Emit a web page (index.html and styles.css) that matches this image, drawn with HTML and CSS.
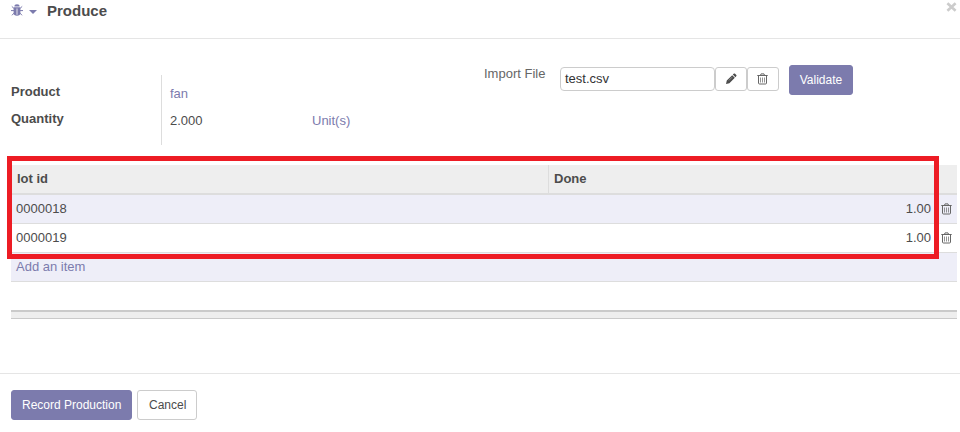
FILE: index.html
```html
<!DOCTYPE html>
<html lang="en">
<head>
<meta charset="utf-8">
<title>Produce</title>
<link rel="stylesheet" href="styles.css">
</head>
<body>
<svg width="0" height="0" class="defs">
  <symbol id="trash" viewBox="0 0 11 12">
    <path d="M0.3 2.5h10.4M3.5 2.3L4 .9h3l.5 1.4M1.5 2.7v7.3q0 1 1 1h6q1 0 1-1V2.7" fill="none" stroke="currentColor"/>
    <path d="M3.5 4.5v5M5.5 4.5v5M7.5 4.5v5" fill="none" stroke="currentColor" stroke-width=".7"/>
  </symbol>
</svg>
<div class="modal">
  <header class="header">
    <svg class="bug" width="12" height="13" viewBox="0 0 12 13"><path d="M3.4 2.6a2.6 2.4 0 0 1 5.2 0zM2.6 3.3h6.8v5.7q0 2.8-3.4 2.8t-3.4-2.8z" fill="currentColor"/><path d="M.8 2.4l2 1.9M11.2 2.4l-2 1.9M0 6.6h12M1 11.3l2-2.2M11 11.3l-2-2.2" stroke="currentColor" fill="none"/><path d="M6 4.5v6.3" stroke="#fff" stroke-width=".8"/></svg>
    <span class="caret"></span>
    <h4 class="title">Produce</h4>
    <svg class="close" width="11" height="10" viewBox="0 0 11 10"><path d="M1.4 1.2l8.2 7.6M9.6 1.2L1.4 8.8" stroke="currentColor" stroke-width="2.6"/></svg>
  </header>
  <main class="body">
    <div class="form">
      <div class="labels"><label>Product</label><label>Quantity</label></div>
      <div class="values">
        <a class="link">fan</a>
        <div class="qty"><span>2.000</span><a class="link">Unit(s)</a></div>
      </div>
      <div class="import">
        <label class="import-label">Import File</label>
        <div class="file">test.csv</div>
        <button class="icon-btn"><svg width="12" height="12" viewBox="0 0 12 12"><path d="M1 11l.8-3.4L7.2 2.2l2.6 2.6-5.4 5.4zM7.8 1.6L9 .6q.6-.4 1.1.1l1.2 1.2q.5.5.1 1.1l-1 1.2z" fill="currentColor"/><path d="M3.8 7.5l3.4-3.4" stroke="#fff" stroke-width=".35"/></svg></button>
        <button class="icon-btn bin"><svg width="11" height="12"><use href="#trash"/></svg></button>
        <button class="btn primary validate">Validate</button>
      </div>
    </div>
    <div class="list">
      <div class="row head"><span>lot id</span><span class="done">Done</span><span></span></div>
      <div class="row odd"><span>0000018</span><span class="num">1.00</span><svg width="11" height="12"><use href="#trash"/></svg></div>
      <div class="row"><span>0000019</span><span class="num">1.00</span><svg width="11" height="12"><use href="#trash"/></svg></div>
      <div class="row odd"><a class="link">Add an item</a></div>
      <div class="highlight"></div>
    </div>
    <div class="totals"></div>
  </main>
  <footer class="footer">
    <button class="btn primary">Record Production</button>
    <button class="btn">Cancel</button>
  </footer>
</div>
</body>
</html>
```
FILE: styles.css
```css
* { box-sizing: border-box; }
body { margin: 0; background: #fff; color: #4c4c4c; font: 13px/20px "Liberation Sans", Arial, sans-serif; overflow: hidden; }
.defs { position: absolute; }
svg { display: block; }
.modal { height: 432px; display: flex; flex-direction: column; }
.header { height: 39px; border-bottom: 1px solid #e5e5e5; display: flex; align-items: flex-start; padding: 0 3px 0 11px; }
.bug { color: #7c7bad; margin-top: 4px; }
.caret { margin: 10px 0 0 6px; border: 4px solid transparent; border-top-color: #7c7bad; border-bottom: 0; }
.title { margin: 1px 0 0 10px; font-size: 15px; line-height: 20px; }
.close { margin: 2px 0 0 auto; color: #ccc; }
.body { height: 334px; padding: 26px 3px 0 11px; }
.form { display: flex; height: 100px; }
.labels { width: 150px; padding-top: 17px; display: flex; flex-direction: column; gap: 7px; font-weight: bold; }
.values { width: 312px; height: 70px; margin-top: 10px; padding: 9px 0 0 8px; border-left: 1px solid #ddd; display: flex; flex-direction: column; gap: 7px; }
.qty { display: flex; }
.qty span { width: 142px; }
.link { color: #7c7bad; }
.import { display: flex; align-items: flex-start; }
.import-label { width: 87px; padding-left: 11px; margin-top: -1px; color: #666; }
.file { width: 155px; height: 24px; margin-top: 2px; border: 1px solid #ccc; border-radius: 4px; padding: 1px 4px; color: #333; }
.icon-btn { width: 32px; height: 24px; margin-top: 2px; padding: 0; border: 1px solid #ccc; border-radius: 3px; background: #fff; color: #4c4c4c; display: flex; align-items: center; justify-content: center; }
.bin { color: #666; padding-right: 1px; }
.btn { height: 30px; padding: 0 11px; border: 1px solid #ccc; border-radius: 3px; background: #fff; color: #4c4c4c; font: 12px "Liberation Sans", Arial, sans-serif; white-space: nowrap; }
.primary { background: #7c7bad; border-color: #7c7bad; color: #fff; padding: 0 10px; }
.validate { width: 64px; margin-left: 10px; padding: 0; }
.list { position: relative; }
.row { height: 29px; display: grid; grid-template-columns: 537px 386px 23px; align-items: center; border-bottom: 1px solid #ddd; }
.row > :first-child { padding-left: 5px; }
.row svg { margin-left: 7px; margin-bottom: 1px; color: #666; }
.row.head { height: 30px; background: #eee; border-bottom: 2px solid #ddd; font-weight: bold; align-items: stretch; line-height: 27px; }
.row.head > :first-child { padding-left: 6px; }
.done { border-left: 1px solid #ddd; padding-left: 5px; }
.odd { background: #eeeef8; }
.num { text-align: right; padding-right: 3px; }
.highlight { position: absolute; left: -4px; top: -9px; width: 932px; height: 103px; border: 5px solid #ed1c24; }
.totals { height: 9px; margin-top: 28px; background: #eee; border-top: 2px solid #cacaca; border-bottom: 1px solid #cacaca; }
.footer { flex: 1; border-top: 1px solid #e5e5e5; padding: 16px 11px 0; display: flex; align-items: flex-start; gap: 5px; }
.footer .primary { width: 121px; }
.footer .btn:last-child { width: 60px; }
```
